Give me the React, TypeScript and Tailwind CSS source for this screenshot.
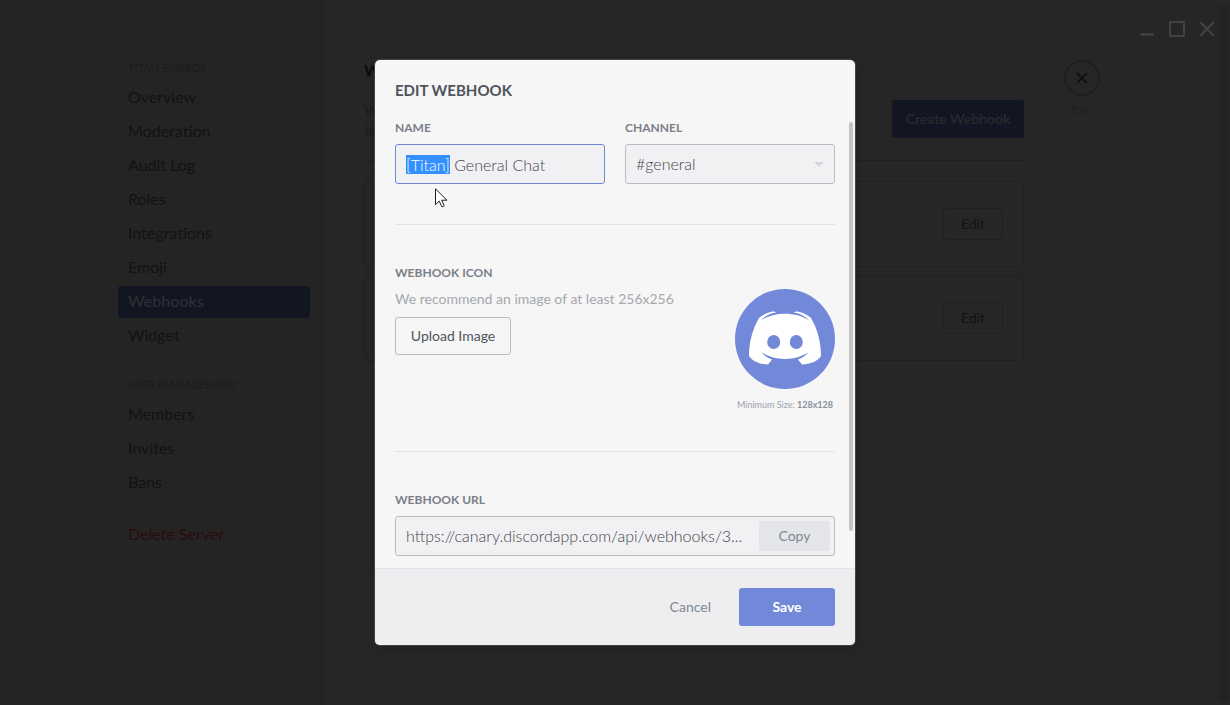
import { useEffect, useRef } from "react";
import type { ReactNode } from "react";

const serverPages = [
  "Overview",
  "Moderation",
  "Audit Log",
  "Roles",
  "Integrations",
  "Emoji",
  "Webhooks",
  "Widget",
];
const userPages = ["Members", "Invites", "Bans"];

function NavHeader({ children }: { children: ReactNode }) {
  return <h2 className="mb-1.5 px-2.5 text-[11px] leading-4 text-[#1c1c1d] uppercase">{children}</h2>;
}

function NavItem({ label, active = false }: { label: string; active?: boolean }) {
  return (
    <li>
      <a
        href="#"
        aria-current={active ? "page" : undefined}
        className={
          active
            ? "block h-8 rounded-[3px] bg-[#121623] px-2.5 text-base leading-[30px] font-semibold text-[#2b2d31]"
            : "block h-8 rounded-[3px] px-2.5 text-base leading-[30px] text-[#121213]"
        }
      >
        {label}
      </a>
    </li>
  );
}

function Sidebar() {
  return (
    <aside className="flex w-[324px] shrink-0 justify-end bg-[#242424] pt-[60px] pr-3.5">
      <nav className="w-48">
        <NavHeader>Titan Embeds</NavHeader>
        <ul className="flex flex-col gap-0.5">
          {serverPages.map((page) => (
            <NavItem key={page} label={page} active={page === "Webhooks"} />
          ))}
        </ul>
        <hr className="mx-2.5 mt-2.5 mb-3.5 border-[#212121]" />
        <NavHeader>User Management</NavHeader>
        <ul className="flex flex-col gap-0.5">
          {userPages.map((page) => (
            <NavItem key={page} label={page} />
          ))}
        </ul>
        <hr className="mx-2.5 mt-2.5 mb-2 border-[#212121]" />
        <button type="button" className="block h-8 px-2.5 text-base leading-[30px] text-[#2b0c0d]">
          Delete Server
        </button>
      </nav>
    </aside>
  );
}

function WebhookCard() {
  return (
    <li className="flex h-[86px] items-center justify-end rounded-[5px] border border-[#202020] px-5">
      <button
        type="button"
        className="h-8 w-[60px] rounded-[3px] border border-[#202020] text-sm text-[#131313]"
      >
        Edit
      </button>
    </li>
  );
}

function WindowControls() {
  return (
    <div className="absolute top-5 right-3.5 z-20 flex gap-3 text-[#3f4347]">
      <button type="button" aria-label="Minimize">
        <svg width="18" height="18" viewBox="0 0 18 18" fill="none" stroke="currentColor" strokeWidth="2.5">
          <path d="M2.5 14.5h13" />
        </svg>
      </button>
      <button type="button" aria-label="Maximize">
        <svg width="18" height="18" viewBox="0 0 18 18" fill="none" stroke="currentColor" strokeWidth="2">
          <path d="M2 2h14v14H2z" />
        </svg>
      </button>
      <button type="button" aria-label="Close window">
        <svg width="18" height="18" viewBox="0 0 18 18" fill="none" stroke="currentColor" strokeWidth="2.2">
          <path d="M2.3 2.3l13.4 13.4M15.7 2.3L2.3 15.7" />
        </svg>
      </button>
    </div>
  );
}

function WebhooksPage() {
  return (
    <main className="flex min-w-0 flex-1 gap-10 pt-[60px] pl-10">
      <section className="w-full max-w-[660px]">
        <h1 className="text-base leading-5 font-bold text-[#0c0c0d] uppercase">Webhooks</h1>
        <div className="mt-5 flex items-start justify-between gap-4">
          <p className="text-sm leading-5 text-[#1b1b1c]">
            Webhooks are a simple way to get automated messages and updates sent to a
            <br />
            text channel in your server.
          </p>
          <button
            type="button"
            className="h-[38px] w-[132px] shrink-0 rounded-[3px] bg-[#121623] text-sm font-semibold text-[#282a2d]"
          >
            Create Webhook
          </button>
        </div>
        <hr className="my-5 border-[#202020]" />
        <ul className="flex flex-col gap-2">
          <WebhookCard />
          <WebhookCard />
        </ul>
      </section>
      <div className="flex w-9 shrink-0 flex-col items-center gap-1.5">
        <button
          type="button"
          aria-label="Close settings"
          className="flex size-9 items-center justify-center rounded-full border-2 border-[#1f1f1f] text-[#111112]"
        >
          <svg width="12" height="12" viewBox="0 0 12 12" fill="none" stroke="currentColor" strokeWidth="1.8">
            <path d="M1 1l10 10M11 1L1 11" />
          </svg>
        </button>
        <span className="text-xs leading-4 font-semibold text-[#202020]">ESC</span>
      </div>
    </main>
  );
}

function WebhookAvatar() {
  return (
    <svg className="size-[100px]" viewBox="0 0 100 100" role="img" aria-label="Webhook icon">
      <circle cx="50" cy="50" r="50" fill="#7289da" />
      <path
        fill="#fff"
        d="M41 23.6C40.2 22.4 38 22.2 35.5 22.9C31 24.1 26.5 26.6 24 29C17.5 40 14 53 14 67C17.5 72.3 24.5 75.3 33 75.5L37 70.4C32.5 69 29 66.6 26.6 63.2C33 67.4 41 69.9 50 69.9C59 69.9 67 67.4 73.4 63.2C71 66.6 67.5 69 63 70.4L67 75.5C75.5 75.3 82.5 72.3 86 67C86 53 82.5 40 76 29C73.5 26.6 69 24.1 64.5 22.9C62 22.2 59.8 22.4 59 23.6C65 24.5 70.5 27.2 74.2 31.4C67 26.8 59 24.7 50 24.7C41 24.7 33 26.8 25.8 31.4C29.5 27.2 35 24.5 41 23.6Z"
      />
      <ellipse cx="38.7" cy="53" rx="6.5" ry="7.1" fill="#7289da" />
      <ellipse cx="61.3" cy="53" rx="6.5" ry="7.1" fill="#7289da" />
    </svg>
  );
}

function Pointer() {
  return (
    <svg
      className="pointer-events-none absolute top-11 left-10"
      width="13"
      height="20"
      viewBox="0 0 13 20"
      aria-hidden="true"
    >
      <path
        d="M.5.8V16.6L4.2 13.1L6.8 18.6Q8 19.2 9.2 17.6L6.7 12.2H11.9Z"
        fill="#fff"
        stroke="#1a1a22"
      />
    </svg>
  );
}

const labelClass = "block text-xs leading-4 font-bold text-[#7a7f88] uppercase";
const fieldClass =
  "h-10 w-full rounded-[3px] border bg-[#f1f1f4] px-2.5 text-base font-light text-[#41454c] outline-none";

function EditWebhookDialog() {
  const nameRef = useRef<HTMLInputElement>(null);

  useEffect(() => {
    nameRef.current?.focus();
    nameRef.current?.setSelectionRange(0, 7);
  }, []);

  return (
    <form
      role="dialog"
      aria-modal="true"
      aria-labelledby="dialog-title"
      className="relative w-full max-w-[480px] overflow-hidden rounded-[5px] bg-[#f6f6f6] shadow-[0_0_0_1px_rgba(90,90,90,0.6),0_2px_10px_rgba(0,0,0,0.2)]"
    >
      <h2 id="dialog-title" className="px-5 pt-5 text-[15px] leading-5 font-bold text-[#4f545c] uppercase">
        Edit Webhook
      </h2>
      <div className="px-5 pt-5 pb-3">
        <div className="grid grid-cols-2 gap-5">
          <div>
            <label htmlFor="name" className={labelClass}>
              Name
            </label>
            <div className="relative mt-2">
              <input
                ref={nameRef}
                id="name"
                defaultValue="[Titan] General Chat"
                className={`${fieldClass} border-[#7289da] selection:bg-[#3390ff] selection:text-white`}
              />
              <Pointer />
            </div>
          </div>
          <div>
            <label htmlFor="channel" className={labelClass}>
              Channel
            </label>
            <div className="relative mt-2">
              <select id="channel" className={`${fieldClass} appearance-none border-[#b9bbbe]`}>
                <option>#general</option>
              </select>
              <svg
                className="pointer-events-none absolute top-[18px] right-[11px]"
                width="10"
                height="5"
                viewBox="0 0 10 5"
                aria-hidden="true"
              >
                <path d="M0 0h10L5 5z" fill="#d6d7da" />
              </svg>
            </div>
          </div>
        </div>

        <hr className="my-10 border-[#e3e4e6]" />

        <div className="flex justify-between">
          <div>
            <h3 className={labelClass}>Webhook Icon</h3>
            <p className="mt-2 text-sm leading-5 text-[#a5a8ad]">We recommend an image of at least 256x256</p>
            <button
              type="button"
              className="mt-2 h-[38px] w-[116px] rounded-[3px] border border-[#b9bbbe] text-sm text-[#4f545c]"
            >
              Upload Image
            </button>
          </div>
          <div className="flex w-[100px] flex-col items-center pt-6">
            <WebhookAvatar />
            <p className="mt-2.5 text-[9px] leading-3 whitespace-nowrap text-[#99a0aa]">
              Minimum Size: <strong className="font-bold text-[#87909c]">128x128</strong>
            </p>
          </div>
        </div>

        <hr className="my-10 border-[#e3e4e6]" />

        <label htmlFor="url" className={labelClass}>
          Webhook URL
        </label>
        <div className="mt-2 flex h-10 items-center rounded-[3px] border border-[#b9bbbe] bg-[#f1f1f4] pr-1">
          <input
            id="url"
            readOnly
            defaultValue="https://canary.discordapp.com/api/webhooks/3..."
            className="min-w-0 flex-1 bg-transparent pl-2.5 text-base font-light text-ellipsis text-[#41454c] outline-none"
          />
          <button type="button" className="h-[30px] w-[71px] rounded-[2px] bg-[#e3e5e9] text-sm text-[#7f8894]">
            Copy
          </button>
        </div>
      </div>
      <div className="absolute top-[62px] right-0.5 h-[409px] w-1 rounded-full bg-[#c3c4c7]" />
      <footer className="flex items-center justify-end gap-7 border-t border-[#e3e4e7] bg-[#eeeef0] px-5 py-[19px]">
        <button type="button" className="text-sm text-[#7f8894]">
          Cancel
        </button>
        <button type="submit" className="h-[38px] w-24 rounded-[3px] bg-[#7289da] text-sm font-bold text-white">
          Save
        </button>
      </footer>
    </form>
  );
}

export default function App() {
  return (
    <div className="relative flex min-h-screen bg-[#262626] font-['Lato',sans-serif]">
      <Sidebar />
      <WebhooksPage />
      <div className="my-1 mr-px w-2.5 shrink-0 rounded-full bg-[#232323]" />
      <WindowControls />
      <div className="absolute inset-0 z-10 flex items-center justify-center">
        <EditWebhookDialog />
      </div>
    </div>
  );
}
